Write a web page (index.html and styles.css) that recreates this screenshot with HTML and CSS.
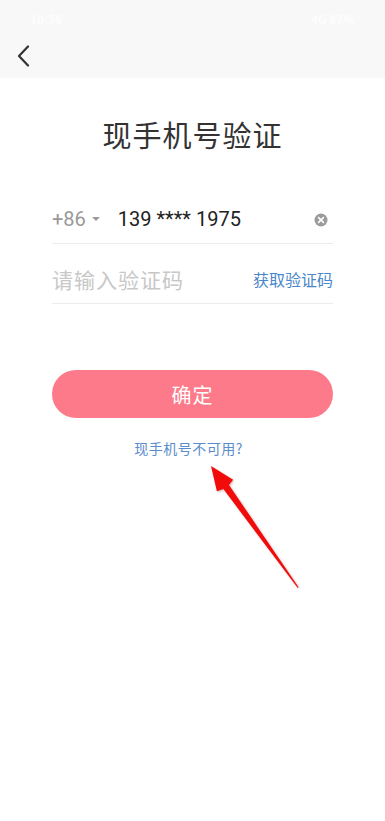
FILE: index.html
```html
<!DOCTYPE html>
<html lang="zh-CN">
<head>
  <meta charset="UTF-8" />
  <title>现手机号验证</title>
  <link rel="stylesheet" href="styles.css">
</head>
<body>
  <div class="top-bar">
    <div class="status-bar">
      <span>10:56</span>
      <span>4G 87%</span>
    </div>
    <div class="nav-bar">
      <svg class="back-btn" width="14" height="22" viewBox="0 0 14 22">
        <path d="M11 1.5 L2 11 L11 20.5" fill="none" stroke="#333" stroke-width="2.2" stroke-linecap="round" stroke-linejoin="round" />
      </svg>
    </div>
  </div>

  <div class="content">
    <h1 class="title">现手机号验证</h1>

    <div class="form-row phone-row">
      <span class="area-code">+86</span>
      <span class="caret"></span>
      <span class="phone">139 **** 1975</span>
      <svg class="clear-btn" width="14" height="14" viewBox="0 0 14 14">
        <circle cx="7" cy="7" r="6.5" fill="#9b9b9b" />
        <path d="M4.6 4.6 L9.4 9.4 M9.4 4.6 L4.6 9.4" stroke="#fff" stroke-width="1.6" stroke-linecap="round" />
      </svg>
    </div>

    <div class="form-row code-row">
      <span class="placeholder">请输入验证码</span>
      <a class="get-code">获取验证码</a>
    </div>

    <button class="submit-btn">确定</button>

    <a class="unavailable">现手机号不可用?</a>
  </div>

  <!-- annotation arrow drawn over the page -->
  <svg class="arrow" width="385" height="821" viewBox="0 0 385 821">
    <polygon points="211,466 233.1,479.7 229,485.1 298.6,587.2 297.6,587.8 223.4,489.1 216.9,491.3" fill="#f20b0b" />
  </svg>
</body>
</html>
```

FILE: styles.css
```css
* {
  margin: 0;
  padding: 0;
  box-sizing: border-box;
  font-family: "Noto Sans CJK SC", "Noto Sans", sans-serif;
}
body {
  background-color: #fff;
  width: 385px;
  min-height: 821px;
  position: relative;
}
.top-bar {
  background-color: #f8f8f8;
  height: 78px;
}
.status-bar {
  height: 36px;
  padding: 0 30px;
  display: flex;
  justify-content: space-between;
  align-items: center;
  color: rgba(255, 255, 255, 0.8);
  font-size: 12px;
  font-weight: bold;
}
.nav-bar {
  height: 42px;
  display: flex;
  align-items: center;
  padding-left: 17px;
  padding-bottom: 3px;
}
.content {
  padding: 0 52px;
  display: flex;
  flex-direction: column;
}
.title {
  margin-top: 36px;
  text-align: center;
  font-size: 29px;
  line-height: 40px;
  font-weight: 400;
  color: #333;
  letter-spacing: 1px;
}
.form-row {
  display: flex;
  align-items: center;
  border-bottom: 1px solid #ececec;
}
.phone-row {
  margin-top: 40px;
  height: 50px;
}
.area-code {
  font-size: 20px;
  color: #999;
  font-family: Roboto, sans-serif;
}
.caret {
  width: 0;
  height: 0;
  border-left: 4px solid transparent;
  border-right: 4px solid transparent;
  border-top: 4px solid #999;
  margin-left: 6px;
  margin-right: 18px;
}
.phone {
  flex: 1;
  font-size: 20px;
  color: #222;
  font-family: Roboto, sans-serif;
}
.clear-btn {
  margin-right: 5px;
  margin-top: 2px;
}
.code-row {
  height: 60px;
  padding-top: 11px;
  justify-content: space-between;
}
.placeholder {
  font-size: 21px;
  color: #c8c8c8;
  letter-spacing: 1px;
}
.get-code {
  font-size: 16px;
  color: #4a86c8;
}
.submit-btn {
  margin-top: 66px;
  height: 48px;
  border: none;
  border-radius: 24px;
  background-color: #fd7a8a;
  color: #fff;
  font-size: 20px;
  letter-spacing: 1px;
}
.unavailable {
  margin-top: 20px;
  text-align: center;
  font-size: 14px;
  line-height: 20px;
  color: #5a8ccb;
  letter-spacing: 0.5px;
  padding-right: 8px;
}
.arrow {
  position: absolute;
  top: 0;
  left: 0;
  pointer-events: none;
  filter: drop-shadow(1px 1px 1px rgba(120, 0, 0, 0.3));
}
```
